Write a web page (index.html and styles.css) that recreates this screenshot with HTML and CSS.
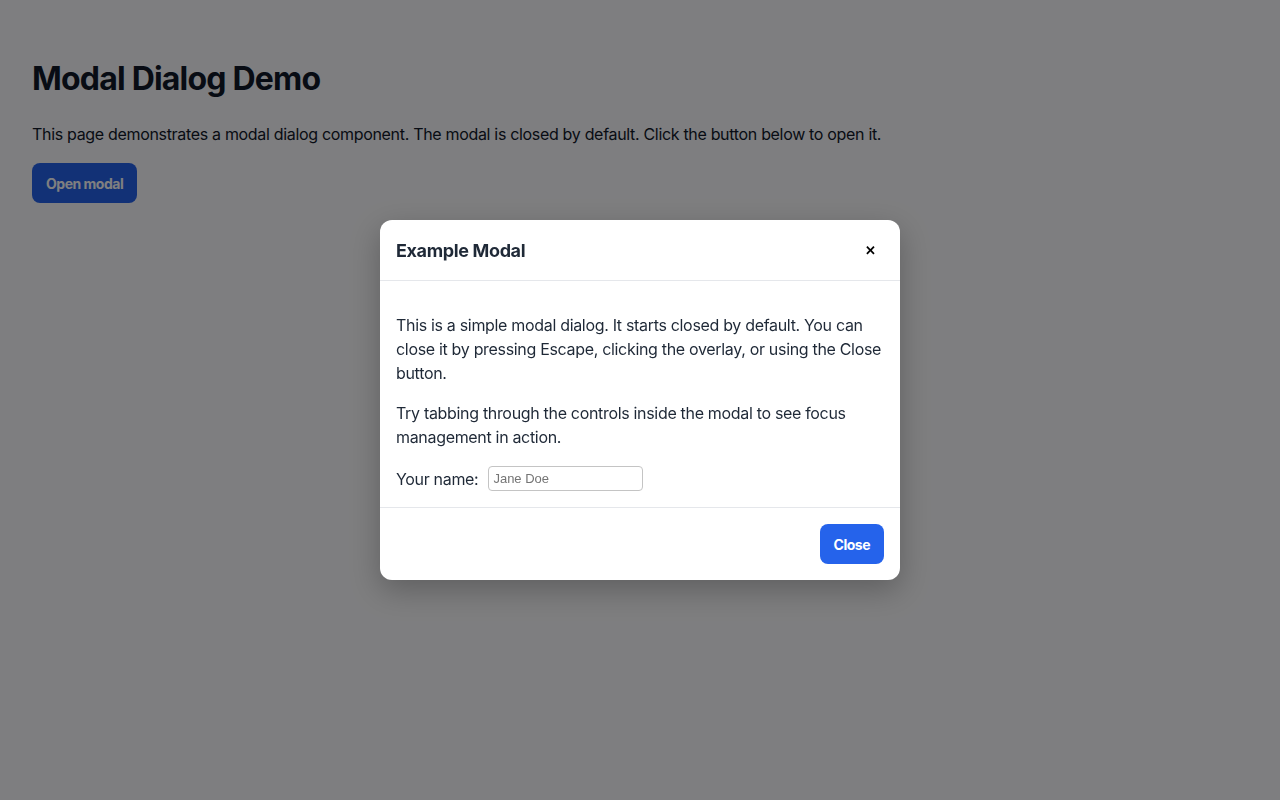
FILE: index.html
```html
<!DOCTYPE html>
<html lang="en">
<head>
    <meta charset="UTF-8">
    <meta name="viewport" content="width=device-width, initial-scale=1.0">
    <title>Modal Dialog Demo</title>
    <link rel="stylesheet" href="styles.css">
</head>
<body>
    <main class="page">
        <h1>Modal Dialog Demo</h1>
        <p>This page demonstrates a modal dialog component. The modal is closed by default. Click the button below to open it.</p>
        <button type="button" class="btn">Open modal</button>
    </main>

    <div class="overlay">
        <div class="modal" role="dialog" aria-modal="true" aria-labelledby="modal-title">
            <div class="modal-header">
                <h2 id="modal-title">Example Modal</h2>
                <button type="button" class="modal-x" aria-label="Close">&#x2715;</button>
            </div>
            <div class="modal-body">
                <p>This is a simple modal dialog. It starts closed by default. You can close it by pressing Escape, clicking the overlay, or using the Close button.</p>
                <p>Try tabbing through the controls inside the modal to see focus management in action.</p>
                <div class="field">
                    <label for="your-name">Your name:</label>
                    <input type="text" id="your-name" placeholder="Jane Doe">
                </div>
            </div>
            <div class="modal-footer">
                <button type="button" class="btn">Close</button>
            </div>
        </div>
    </div>
</body>
</html>
```

FILE: styles.css
```css
body {
    margin: 0;
    font-family: Inter, "Noto Sans", sans-serif;
    color: #111827;
    background-color: #fcfcff;
    font-size: 16px;
    line-height: 1.5;
    letter-spacing: -0.02em;
}
.page {
    padding: 32px;
}
h1 {
    font-size: 32px;
    font-weight: 700;
    line-height: 1.2;
    letter-spacing: -0.025em;
    margin: 28px 0 24px;
}
.page p {
    margin: 0 0 17px;
}
.btn {
    font-family: inherit;
    font-size: 14px;
    font-weight: 700;
    letter-spacing: -0.035em;
    color: #ffffff;
    background-color: #2563eb;
    border: none;
    border-radius: 8px;
    padding: 0 14px;
    height: 40px;
    cursor: pointer;
}
.overlay {
    position: fixed;
    inset: 0;
    background-color: rgba(0, 0, 2, 0.5);
    display: flex;
    align-items: center;
    justify-content: center;
}
.modal {
    width: 520px;
    background-color: #ffffff;
    border-radius: 12px;
    box-shadow: 0 10px 30px rgba(0, 0, 0, 0.25);
    color: #1f2937;
}
.modal-header {
    display: flex;
    align-items: center;
    justify-content: space-between;
    height: 60px;
    padding: 0 16px;
    border-bottom: 1px solid #e5e7eb;
}
.modal-header h2 {
    margin: 0;
    font-size: 18px;
    font-weight: 700;
    letter-spacing: -0.02em;
}
.modal-x {
    background: none;
    border: none;
    font-size: 13px;
    font-weight: 900;
    color: #000000;
    width: 28px;
    height: 28px;
    padding: 0;
    cursor: pointer;
}
.modal-body {
    padding: 16px;
}
.modal-body p {
    margin: 16px 0;
}
.field {
    display: flex;
    align-items: center;
    gap: 10px;
    padding-top: 1px;
}
.field input {
    width: 155px;
    height: 25px;
    box-sizing: border-box;
    border: 1px solid #c4c4c4;
    border-radius: 4px;
    padding: 0 4px;
    font-family: "Liberation Sans", Arial, sans-serif;
    font-size: 13px;
    letter-spacing: 0;
}
.modal-footer {
    display: flex;
    justify-content: flex-end;
    padding: 16px;
    border-top: 1px solid #e5e7eb;
}
```
